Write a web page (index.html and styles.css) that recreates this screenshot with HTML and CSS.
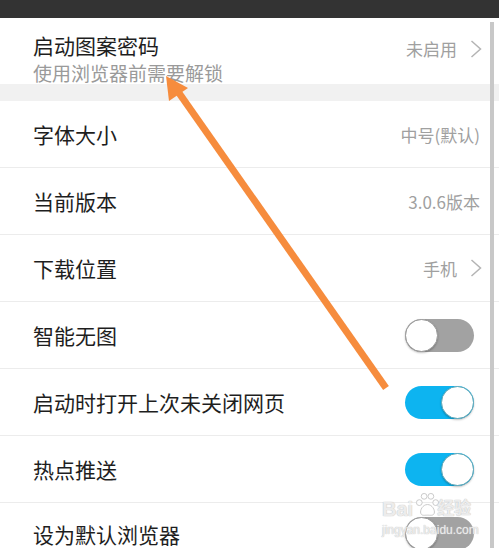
FILE: index.html
```html
<!DOCTYPE html>
<html lang="zh-CN">
<head>
    <meta charset="UTF-8">
    <meta name="viewport" content="width=device-width, initial-scale=1.0">
    <title>设置</title>
    <link rel="stylesheet" href="styles.css">
</head>
<body>

<div class="screen">
    <div class="status-bar"></div>

    <div class="group">
        <div class="item item-tall">
            <div class="item-text">
                <div class="item-title">启动图案密码</div>
                <div class="item-sub">使用浏览器前需要解锁</div>
            </div>
            <div class="item-value">未启用<svg class="chevron" viewBox="0 0 12 18"><polyline points="1.5,1 10.5,9 1.5,17"/></svg></div>
        </div>
    </div>

    <div class="group-gap"></div>

    <div class="group">
        <div class="item">
            <div class="item-title">字体大小</div>
            <div class="item-value">中号(默认)</div>
        </div>
        <div class="item">
            <div class="item-title">当前版本</div>
            <div class="item-value">3.0.6版本</div>
        </div>
        <div class="item">
            <div class="item-title">下载位置</div>
            <div class="item-value">手机<svg class="chevron" viewBox="0 0 12 18"><polyline points="1.5,1 10.5,9 1.5,17"/></svg></div>
        </div>
        <div class="item">
            <div class="item-title">智能无图</div>
            <div class="switch"><span class="knob"></span></div>
        </div>
        <div class="item">
            <div class="item-title">启动时打开上次未关闭网页</div>
            <div class="switch on"><span class="knob"></span></div>
        </div>
        <div class="item">
            <div class="item-title">热点推送</div>
            <div class="switch on"><span class="knob"></span></div>
        </div>
        <!-- only the top of this row is on screen -->
        <div class="item item-cut">
            <div class="item-title">设为默认浏览器</div>
            <div class="switch"><span class="knob"></span></div>
        </div>
    </div>

    <!-- overlays -->
    <div class="scrollbar"></div>

    <div class="watermark">
        <div class="wm-logo">
            <span>Bai</span>
            <svg class="wm-paw" viewBox="0 0 28 28">
                <circle cx="5.5" cy="11" r="3"/>
                <circle cx="10.5" cy="4.5" r="3"/>
                <circle cx="17.5" cy="4.5" r="3"/>
                <circle cx="22.5" cy="11" r="3"/>
                <path d="M14 13 C9 13 6 19 7 22 C8 25 11 24 14 24 C17 24 20 25 21 22 C22 19 19 13 14 13 Z"/>
            </svg>
            <span class="wm-cn">经验</span>
        </div>
        <div class="wm-url">jingyan.baidu.com</div>
    </div>

    <svg class="arrow" viewBox="0 0 499 548">
        <line x1="386" y1="388" x2="179" y2="93"/>
        <polygon points="166,76 188,88 169,101"/>
    </svg>
</div>

</body>
</html>
```

FILE: styles.css
```css
body {
    margin: 0;
    background: #ffffff;
    font-family: "Noto Sans CJK SC", "Noto Sans", sans-serif;
}
.screen {
    position: relative;
    width: 499px;
    height: 548px;
    overflow: hidden;
    background: #ffffff;
}
.status-bar {
    height: 18px;
    background-color: #333333;
}
.group {
    background: #ffffff;
}
.group-gap {
    height: 17px;
    background-color: #f1f1f1;
}
.item {
    display: flex;
    align-items: center;
    justify-content: space-between;
    height: 66px;
    padding: 0 19px 0 33px;
    border-bottom: 1px solid #ececec;
}
.item-tall {
    align-items: flex-start;
    padding-top: 16px;
    height: 50px;
    border-bottom: none;
}
.item-cut {
    align-items: flex-start;
    height: 45px;
    border-bottom: none;
}
.item-cut .item-title {
    margin-top: 20px;
}
.item-cut .switch {
    margin-top: 14px;
}
.item-text {
    display: flex;
    flex-direction: column;
}
.item-title {
    font-size: 21px;
    line-height: 22px;
    color: #1e1e1e;
}
.item-sub {
    font-size: 19px;
    line-height: 22px;
    color: #9a9a9a;
    margin-top: 6px;
}
.item-tall .item-value {
    margin-top: 2px;
}
.item-value {
    display: flex;
    align-items: center;
    font-size: 17px;
    color: #a0a0a0;
}
.chevron {
    width: 12px;
    height: 18px;
    margin-left: 13px;
    margin-right: -2px;
    fill: none;
    stroke: #b4b4b4;
    stroke-width: 1.5;
}
.switch {
    position: relative;
    width: 69px;
    height: 33px;
    margin-right: 6px;
    border-radius: 17px;
    background-color: #a2a2a2;
}
.switch.on {
    background-color: #0db4f0;
}
.knob {
    position: absolute;
    top: 0;
    left: 0;
    width: 31px;
    height: 31px;
    border-radius: 50%;
    background: #ffffff;
    border: 1px solid #9a9a9a;
    box-shadow: 0 1px 2px rgba(0, 0, 0, 0.25);
}
.switch.on .knob {
    left: auto;
    right: 0;
    border-color: #5fa8b8;
}
.scrollbar {
    position: absolute;
    top: 22px;
    bottom: 0;
    left: 490px;
    width: 4px;
    background-color: #c8c8c8;
}
.watermark {
    position: absolute;
    left: 382px;
    top: 492px;
    color: rgba(255, 255, 255, 0.7);
    text-shadow: 0 0 1px #c4c4c4, 0 0 1px #c4c4c4;
    font-family: "Liberation Sans", "Noto Sans CJK SC", sans-serif;
}
.wm-logo {
    display: flex;
    align-items: flex-end;
    font-size: 20px;
    line-height: 22px;
    font-weight: bold;
}
.wm-paw {
    width: 27px;
    height: 27px;
    margin: 0 -4px 1px 1px;
    fill: rgba(255, 255, 255, 0.7);
    stroke: #c8c8c8;
    stroke-width: 1;
}
.wm-cn {
    font-size: 17px;
}
.wm-url {
    font-size: 12px;
    line-height: 16px;
    margin-top: 2px;
}
.arrow {
    position: absolute;
    top: 0;
    left: 0;
    width: 499px;
    height: 548px;
    pointer-events: none;
}
.arrow line {
    stroke: #f68c3d;
    stroke-width: 7;
}
.arrow polygon {
    fill: #f68c3d;
}
```
